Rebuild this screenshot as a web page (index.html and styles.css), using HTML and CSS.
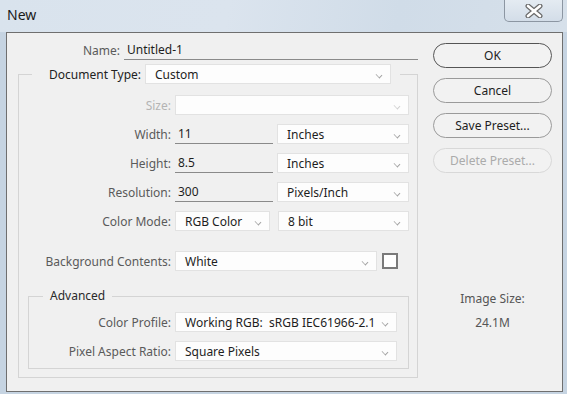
FILE: index.html
```html
<!DOCTYPE html>
<html lang="en">
<head>
    <meta charset="UTF-8">
    <meta name="viewport" content="width=device-width, initial-scale=1.0">
    <title>New</title>
    <link rel="stylesheet" href="styles.css">
</head>
<body>
    <div class="window">
        <div class="title-bar">
            <span class="title">New</span>
            <div class="close-btn">
                <svg width="20" height="14" viewBox="0 0 20 14">
                    <path d="M4 2 L16 12 M16 2 L4 12" stroke="#6a6a6a" stroke-width="5" stroke-linecap="round" fill="none"/>
                    <path d="M4 2 L16 12 M16 2 L4 12" stroke="#ffffff" stroke-width="2.6" stroke-linecap="round" fill="none"/>
                </svg>
            </div>
        </div>

        <div class="client">
            <div class="form">
                <div class="name-row">
                    <label class="name-label">Name:</label>
                    <div class="text-field name-field">Untitled-1</div>
                </div>

                <fieldset class="doc-group">
                    <legend class="doc-legend">
                        <span class="legend-label">Document Type:</span>
                        <div class="select doc-select">Custom<span class="chev"></span></div>
                    </legend>

                    <div class="row">
                        <label class="disabled">Size:</label>
                        <div class="select empty"><span class="chev light"></span></div>
                    </div>
                    <div class="row">
                        <label>Width:</label>
                        <div class="pair">
                            <div class="text-field num-field">11</div>
                            <div class="select grow">Inches<span class="chev"></span></div>
                        </div>
                    </div>
                    <div class="row">
                        <label>Height:</label>
                        <div class="pair">
                            <div class="text-field num-field">8.5</div>
                            <div class="select grow">Inches<span class="chev"></span></div>
                        </div>
                    </div>
                    <div class="row">
                        <label>Resolution:</label>
                        <div class="pair">
                            <div class="text-field num-field">300</div>
                            <div class="select grow">Pixels/Inch<span class="chev"></span></div>
                        </div>
                    </div>
                    <div class="row">
                        <label>Color Mode:</label>
                        <div class="pair wide-gap">
                            <div class="select mode-select">RGB Color<span class="chev"></span></div>
                            <div class="select grow">8 bit<span class="chev"></span></div>
                        </div>
                    </div>
                    <div class="row bg-row">
                        <label>Background Contents:</label>
                        <div class="pair">
                            <div class="select bg-select">White<span class="chev"></span></div>
                            <div class="swatch"></div>
                        </div>
                    </div>

                    <fieldset class="adv-group">
                        <legend class="adv-legend">Advanced</legend>
                        <div class="row adv-row">
                            <label>Color Profile:</label>
                            <div class="select">Working RGB:&nbsp; sRGB IEC61966-2.1<span class="chev"></span></div>
                        </div>
                        <div class="row adv-row">
                            <label>Pixel Aspect Ratio:</label>
                            <div class="select">Square Pixels<span class="chev"></span></div>
                        </div>
                    </fieldset>
                </fieldset>
            </div>

            <div class="side">
                <button class="btn default">OK</button>
                <button class="btn">Cancel</button>
                <button class="btn">Save Preset...</button>
                <button class="btn" disabled>Delete Preset...</button>

                <div class="image-size">
                    <span class="size-label">Image Size:</span>
                    <span class="size-value">24.1M</span>
                </div>
            </div>
        </div>
    </div>
</body>
</html>
```

FILE: styles.css
```css
* {
    margin: 0;
    padding: 0;
    box-sizing: border-box;
    font-family: 'Noto Sans', 'Open Sans', sans-serif;
}

body {
    background: #c6d4e2;
    width: 567px;
    height: 394px;
    overflow: hidden;
}

.window {
    display: flex;
    flex-direction: column;
}

/* title bar */
.title-bar {
    height: 32px;
    display: flex;
    justify-content: space-between;
    align-items: flex-start;
    padding-left: 7px;
    background: linear-gradient(100deg, #d9e3ed 0%, #dbe4ee 40%, #d0dce8 70%, #d6e0ea 100%);
}

.title {
    font-size: 14px;
    line-height: 30px;
    color: #1a1a1a;
}

.close-btn {
    width: 59px;
    height: 22px;
    margin-right: 4px;
    border: 1px solid #8c96a2;
    border-top: none;
    border-radius: 0 0 5px 5px;
    background: linear-gradient(#e4ebf2, #d3dde8);
    display: flex;
    align-items: center;
    justify-content: center;
}

/* dialog body */
.client {
    margin-left: 6px;
    width: 557px;
    height: 360px;
    background: #f0f0f0;
    border: 1px solid #6f6f6f;
    display: flex;
    padding-top: 8px;
}

.form {
    width: 412px;
    font-size: 12px;
}

label {
    color: #5a5a5a;
    text-align: right;
    white-space: nowrap;
}

label.disabled {
    color: #b4b4b4;
}

.name-row {
    display: flex;
    align-items: center;
    gap: 4px;
    height: 19px;
}

.name-label {
    width: 113px;
}

.text-field {
    height: 19px;
    line-height: 18px;
    padding-left: 3px;
    color: #1e1e1e;
    border-bottom: 1px solid #8a8a8a;
}

.name-field {
    width: 294px;
}

/* document type group */
.doc-group {
    margin: 4px 0 0 11px;
    width: 398px;
    border: 1px solid #d4d4d4;
    padding: 11px 8px 8px 0;
}

.doc-legend {
    margin-left: 13px;
    padding: 0 9px 0 16px;
    display: flex;
    align-items: center;
    gap: 4px;
}

.legend-label {
    width: 93px;
    color: #222;
    text-align: right;
    white-space: nowrap;
}

.select {
    position: relative;
    height: 20px;
    line-height: 19px;
    padding-left: 9px;
    background: #fdfdfd;
    border: 1px solid #e2e2e2;
    color: #1e1e1e;
    white-space: nowrap;
}

.doc-select {
    width: 246px;
}

.chev {
    position: absolute;
    right: 8px;
    top: 7px;
    width: 6px;
    height: 6px;
    border-right: 1px solid #a0a0a0;
    border-bottom: 1px solid #a0a0a0;
    transform: rotate(45deg) scale(0.9, 0.7);
}

.chev.light {
    border-color: #cfcfcf;
}

.row {
    display: grid;
    grid-template-columns: 152px 1fr;
    column-gap: 4px;
    align-items: center;
    height: 20px;
    margin-bottom: 9px;
}

.pair {
    display: flex;
    align-items: center;
    gap: 4px;
}

.pair.wide-gap {
    gap: 8px;
}

.num-field {
    width: 98px;
}

.grow {
    flex: 1;
}

.mode-select {
    width: 95px;
}

/* sibling margins collapse, so the 20px gap lives here */
.bg-row {
    margin-top: 20px;
    margin-bottom: 0;
}

.bg-select {
    width: 202px;
}

.swatch {
    width: 16px;
    height: 16px;
    margin-left: 1px;
    background: #fff;
    border: 2px solid #7a7a7a;
}

/* advanced group */
.adv-group {
    margin: 17px 0 0 9px;
    width: 381px;
    border: 1px solid #d4d4d4;
    padding: 8px 11px 7px 0;
}

.adv-legend {
    margin-left: 14px;
    padding: 0 7px;
    line-height: 16px;
    color: #2a2a2a;
}

.adv-row {
    grid-template-columns: 142px 1fr;
}

.adv-row:last-child {
    margin-bottom: 0;
}

/* buttons column */
.side {
    margin-left: 14px;
    width: 119px;
    display: flex;
    flex-direction: column;
    gap: 10px;
    padding-top: 2px;
}

.btn {
    height: 25px;
    border: 1px solid #9a9a9a;
    border-radius: 13px;
    background: #f2f2f2;
    font-size: 12px;
    color: #1e1e1e;
}

.btn.default {
    border-color: #555;
}

.btn:disabled {
    border-color: #d8d8d8;
    color: #ababab;
}

.image-size {
    margin-top: 108px;
    display: flex;
    flex-direction: column;
    align-items: center;
    gap: 8px;
    font-size: 12px;
    line-height: 16px;
    color: #555;
}
```
